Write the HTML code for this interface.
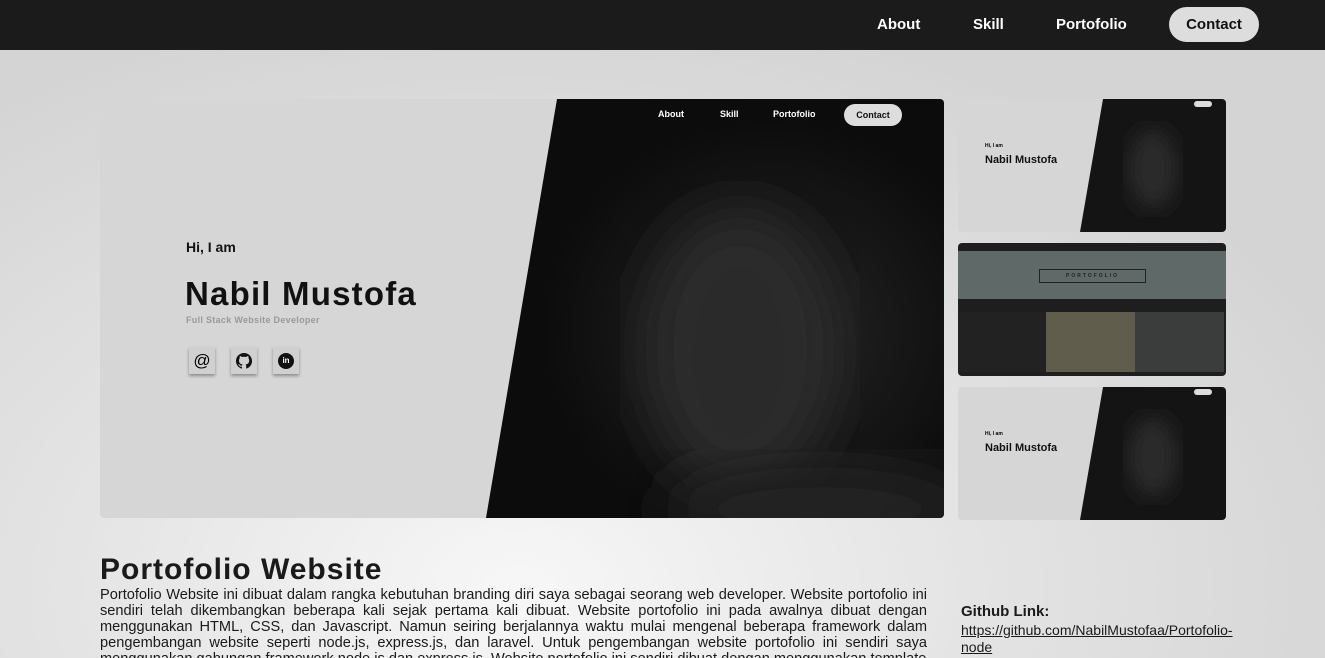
<!DOCTYPE html>
<html style="overflow:hidden;width:1325px;height:658px"><head><style>
*{margin:0;padding:0;box-sizing:border-box}
body{width:1325px;height:658px;overflow:hidden;font-family:"Liberation Sans",sans-serif;background:radial-gradient(ellipse 900px 600px at 520px 590px,#f7f7f7 0%,#e4e4e4 50%,#d4d4d4 100%);position:relative}
nav{position:absolute;top:0;left:0;width:1325px;height:50px;background:#1b1b1b}
nav a{position:absolute;top:16px;color:#fff;font-weight:bold;font-size:15px;text-decoration:none}
.btn{position:absolute;left:1169px;top:7px;width:90px;height:35px;border-radius:18px;background:#ddd;color:#111;font-weight:bold;font-size:15px;text-align:center;line-height:35px}
.hero{position:absolute;left:100px;top:99px;width:844px;height:419px;border-radius:4px;overflow:hidden;background:#d6d6d6}
.th{position:absolute;left:958px;width:268px;height:133px;border-radius:4px;overflow:hidden;background:#d6d6d6}
.ic{position:absolute;top:248px;width:26px;height:27px;background:#d0d0d0;box-shadow:0 2px 3px rgba(0,0,0,.35);display:flex;align-items:center;justify-content:center}
</style></head><body>
<nav><a style="left:877px">About</a><a style="left:973px">Skill</a><a style="left:1056px">Portofolio</a><div class="btn">Contact</div></nav>

<div class="hero">
<svg width="844" height="419" style="position:absolute;left:0;top:0"><defs><radialGradient id="f" cx="0.62" cy="0.55" r="0.5"><stop offset="0" stop-color="#262626"/><stop offset="0.6" stop-color="#161616"/><stop offset="1" stop-color="#0c0c0c"/></radialGradient><filter id="b"><feGaussianBlur stdDeviation="25"/></filter></defs>
<polygon points="457,0 844,0 844,419 386,419" fill="url(#f)"/>
<ellipse cx="640" cy="250" rx="100" ry="140" fill="#2a2a2a" filter="url(#b)"/>
<ellipse cx="720" cy="410" rx="160" ry="50" fill="#202020" filter="url(#b)"/>
</svg>
<div style="position:absolute;left:558px;top:10px;color:#fff;font-size:9px;font-weight:bold">About</div>
<div style="position:absolute;left:620px;top:10px;color:#fff;font-size:9px;font-weight:bold">Skill</div>
<div style="position:absolute;left:673px;top:10px;color:#fff;font-size:9px;font-weight:bold">Portofolio</div>
<div style="position:absolute;left:744px;top:5px;width:58px;height:22px;border-radius:11px;background:#ddd;color:#111;font-size:9px;font-weight:bold;text-align:center;line-height:22px">Contact</div>
<div style="position:absolute;left:86px;top:140px;font-size:14px;font-weight:bold;color:#111">Hi, I am</div>
<div style="position:absolute;left:85px;top:176px;font-size:33px;font-weight:bold;color:#111;letter-spacing:1.2px">Nabil Mustofa</div>
<div style="position:absolute;left:86px;top:216px;font-size:9px;font-weight:bold;color:#999;letter-spacing:.3px">Full Stack Website Developer</div>
<div class="ic" style="left:89px;font-size:17px">@</div>
<div class="ic" style="left:131px"><svg width="16" height="16" viewBox="0 0 16 16"><path fill="#111" d="M8 0a8 8 0 0 0-2.5 15.6c.4 0 .5-.2.5-.4v-1.5c-2.2.5-2.7-1-2.7-1-.4-.9-.9-1.2-.9-1.2-.7-.5.1-.5.1-.5.8.1 1.2.8 1.2.8.7 1.3 1.9.9 2.4.7 0-.5.3-.9.5-1.1-1.8-.2-3.6-.9-3.6-4 0-.9.3-1.600.8-2.1-.1-.2-.4-1 .1-2.1 0 0 .7-.2 2.2.8a7.6 7.6 0 0 1 4 0c1.5-1 2.2-.8 2.2-.8.4 1.1.2 1.9.1 2.1.5.6.8 1.3.8 2.1 0 3.1-1.9 3.8-3.6 4 .3.3.6.8.6 1.5v2.2c0 .2.1.5.6.4A8 8 0 0 0 8 0z"/></svg></div>
<div class="ic" style="left:173px"><div style="width:16px;height:16px;border-radius:50%;background:#111;color:#fff;font-size:8px;font-weight:bold;text-align:center;line-height:16px">in</div></div>
</div>

<div class="th" style="top:99px"><svg width="268" height="133"><defs><filter id="b2"><feGaussianBlur stdDeviation="10"/></filter></defs><polygon points="145,0 268,0 268,133 122,133" fill="#141414"/><ellipse cx="195" cy="70" rx="25" ry="40" fill="#2a2a2a" filter="url(#b2)"/></svg>
<div style="position:absolute;left:27px;top:44px;font-size:5px;font-weight:bold">Hi, I am</div>
<div style="position:absolute;left:27px;top:55px;font-size:11px;font-weight:bold;color:#111">Nabil Mustofa</div>
<div style="position:absolute;left:236px;top:2px;width:18px;height:6px;border-radius:3px;background:#ddd"></div></div>
<div class="th" style="top:243px;background:#1e1e1e"><div style="position:absolute;left:0;top:8px;width:268px;height:48px;background:#5f6a68"></div>
<div style="position:absolute;left:81px;top:26px;width:107px;height:14px;border:1px solid #222;font-size:5px;text-align:center;line-height:12px;letter-spacing:2px;font-weight:bold;color:#222">PORTOFOLIO</div>
<div style="position:absolute;left:0;top:69px;width:88px;height:60px;background:#222"></div>
<div style="position:absolute;left:88px;top:69px;width:89px;height:60px;background:#605d4c"></div>
<div style="position:absolute;left:177px;top:69px;width:89px;height:60px;background:#3b3d3d"></div></div>
<div class="th" style="top:387px"><svg width="268" height="133"><polygon points="145,0 268,0 268,133 122,133" fill="#141414"/><ellipse cx="195" cy="70" rx="25" ry="40" fill="#2a2a2a" filter="url(#b2)"/></svg>
<div style="position:absolute;left:27px;top:44px;font-size:5px;font-weight:bold">Hi, I am</div>
<div style="position:absolute;left:27px;top:55px;font-size:11px;font-weight:bold;color:#111">Nabil Mustofa</div>
<div style="position:absolute;left:236px;top:2px;width:18px;height:6px;border-radius:3px;background:#ddd"></div></div>

<div style="position:absolute;left:100px;top:553px;font-size:30px;font-weight:bold;color:#1a1a1a;letter-spacing:1px">Portofolio Website</div>
<p style="position:absolute;left:100px;top:587px;width:827px;font-size:14.6px;line-height:16px;text-align:justify;color:#1a1a1a">Portofolio Website ini dibuat dalam rangka kebutuhan branding diri saya sebagai seorang web developer. Website portofolio ini sendiri telah dikembangkan beberapa kali sejak pertama kali dibuat. Website portofolio ini pada awalnya dibuat dengan menggunakan HTML, CSS, dan Javascript. Namun seiring berjalannya waktu mulai mengenal beberapa framework dalam pengembangan website seperti node.js, express.js, dan laravel. Untuk pengembangan website portofolio ini sendiri saya menggunakan gabungan framework node.js dan express.js. Website portofolio ini sendiri dibuat dengan menggunakan template</p>
<div style="position:absolute;left:961px;top:603px;font-size:15px;font-weight:bold;color:#1a1a1a">Github Link:</div>
<div style="position:absolute;left:961px;top:622px;width:290px;font-size:14px;line-height:17px;color:#1a1a1a;text-decoration:underline">https://github.com/NabilMustofaa/Portofolio-node</div>
</body></html>
